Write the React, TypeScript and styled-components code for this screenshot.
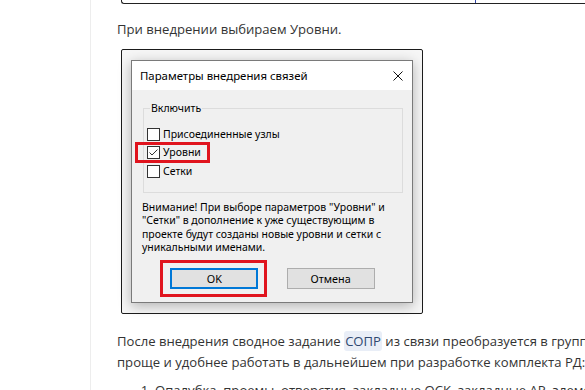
import styled, { createGlobalStyle } from 'styled-components'

const GlobalStyle = createGlobalStyle`
  html, body {
    margin: 0;
    padding: 0;
    height: 390px;
    overflow: hidden;
    background: #ffffff;
  }
  body {
    font-family: "Open Sans", "Noto Sans", sans-serif;
    color: #333333;
  }
`

const Page = styled.div`
  display: flex;
  height: 390px;
`

const Sidebar = styled.aside`
  flex: 0 0 90px;
  border-right: 1px solid #ededed;
`

const Article = styled.main`
  flex: 0 0 760px;
  padding-left: 26px;
  font-size: 13.1px;
  line-height: 21px;
`

const TableStub = styled.div`
  display: flex;
  margin-left: 4px;
  height: 3px;
  border-left: 1px solid #222;
  border-bottom: 1px solid #222;
  border-bottom-left-radius: 3px;
`

const TableCell = styled.div`
  flex: 0 0 353px;
  border-right: 1px solid #3046a8;
`

const Paragraph = styled.p<{ $top: number; $bottom: number }>`
  margin: ${({ $top, $bottom }) => `${$top}px 0 ${$bottom}px`};
  white-space: nowrap;
`

const Abbr = styled.span`
  background: #e9eef7;
  color: #2f4870;
  border-radius: 3px;
  padding: 1px 1px;
`

const ShotFrame = styled.div`
  width: 302px;
  box-sizing: border-box;
  margin-left: 4px;
  padding: 10px 9px 10px 9px;
  border: 1px solid #1c1c1c;
  border-radius: 2px;
  background: #f6f6f6;
`

const Dialog = styled.div`
  width: 282px;
  box-sizing: border-box;
  border: 1px solid #7a7a7a;
  background: #f0f0f0;
  box-shadow: 0 3px 12px rgba(0, 0, 0, 0.28);
  font-family: "Noto Sans", "Open Sans", sans-serif;
  color: #000;
`

const TitleBar = styled.div`
  display: flex;
  align-items: center;
  justify-content: space-between;
  height: 29px;
  padding: 0 9px 0 8px;
  background: #ffffff;
  font-size: 11.4px;
`

const DialogBody = styled.div`
  display: flex;
  flex-direction: column;
  padding: 0 9px 13px 10px;
  font-size: 10.5px;
`

const Group = styled.fieldset`
  margin: 11px 0 0 1px;
  padding: 10px 3px 11px 3px;
  border: 1px solid #dcdcdc;
  min-width: 0;
`

const Legend = styled.legend`
  margin-left: 3px;
  padding: 0 1px;
  line-height: 14px;
`

const CheckRow = styled.label`
  position: relative;
  display: flex;
  align-items: center;
  gap: 3px;
  height: 18.5px;
`

const Box = styled.span`
  display: inline-flex;
  align-items: center;
  justify-content: center;
  width: 13px;
  height: 13px;
  box-sizing: border-box;
  border: 1px solid #333;
  background: #fff;
`

const Mark = styled.span`
  position: absolute;
  border: 3px solid #e0141e;
  pointer-events: none;
`

const RowMark = styled(Mark)`
  left: -12px;
  top: -1.5px;
  width: 75px;
  height: 21px;
  box-sizing: border-box;
`

const Warning = styled.p`
  margin: 8px 0 0;
  line-height: 13.5px;
  white-space: nowrap;
`

const Buttons = styled.div`
  display: flex;
  justify-content: space-evenly;
  margin-top: 13px;
`

const ButtonSlot = styled.span`
  position: relative;
  display: inline-flex;
`

const ButtonMark = styled(Mark)`
  inset: -8px -9px -8px -10px;
`

const DialogButton = styled.button<{ $primary?: boolean }>`
  width: 88px;
  height: 21px;
  box-sizing: border-box;
  padding: 0;
  font-family: inherit;
  font-size: 10.8px;
  color: #000;
  background: #e1e1e1;
  border: ${({ $primary }) => ($primary ? '2px solid #0078d7' : '1px solid #adadad')};
`

const List = styled.ol`
  margin: 7px 0 0;
  padding-left: 38px;
  white-space: nowrap;
`

const CheckIcon = () => (
  <svg width="11" height="11" viewBox="0 0 11 11">
    <polyline points="1.5,5.5 4,8 9.5,2.5" fill="none" stroke="#333" strokeWidth="1" />
  </svg>
)

const CloseIcon = () => (
  <svg width="10" height="10" viewBox="0 0 10 10">
    <path d="M0.5 0.5 L9.5 9.5 M9.5 0.5 L0.5 9.5" stroke="#111" strokeWidth="1" />
  </svg>
)

const options = [
  { label: 'Присоединенные узлы', checked: false, marked: false },
  { label: 'Уровни', checked: true, marked: true },
  { label: 'Сетки', checked: false, marked: false },
]

export default function App() {
  return (
    <>
      <GlobalStyle />
      <Page>
        <Sidebar />
        <Article>
          <TableStub>
            <TableCell />
          </TableStub>
          <Paragraph $top={15} $bottom={9}>При внедрении выбираем Уровни.</Paragraph>

          <ShotFrame>
            <Dialog>
              <TitleBar>
                <span>Параметры внедрения связей</span>
                <CloseIcon />
              </TitleBar>
              <DialogBody>
                <Group>
                  <Legend>Включить</Legend>
                  {options.map((o) => (
                    <CheckRow key={o.label}>
                      <Box>{o.checked && <CheckIcon />}</Box>
                      {o.label}
                      {o.marked && <RowMark />}
                    </CheckRow>
                  ))}
                </Group>
                <Warning>
                  Внимание! При выборе параметров "Уровни" и
                  <br />
                  "Сетки" в дополнение к уже существующим в
                  <br />
                  проекте будут созданы новые уровни и сетки с
                  <br />
                  уникальными именами.
                </Warning>
                <Buttons>
                  <ButtonSlot>
                    <DialogButton $primary>OK</DialogButton>
                    <ButtonMark />
                  </ButtonSlot>
                  <DialogButton>Отмена</DialogButton>
                </Buttons>
              </DialogBody>
            </Dialog>
          </ShotFrame>

          <Paragraph $top={17} $bottom={0}>
            После внедрения сводное задание <Abbr>СОПР</Abbr> из связи преобразуется в группу элементов, с которой
            <br />
            проще и удобнее работать в дальнейшем при разработке комплекта РД:
          </Paragraph>
          <List>
            <li>Опалубка, проемы, отверстия, закладные ОСК, закладные АР, элементы каркаса</li>
          </List>
        </Article>
      </Page>
    </>
  )
}
